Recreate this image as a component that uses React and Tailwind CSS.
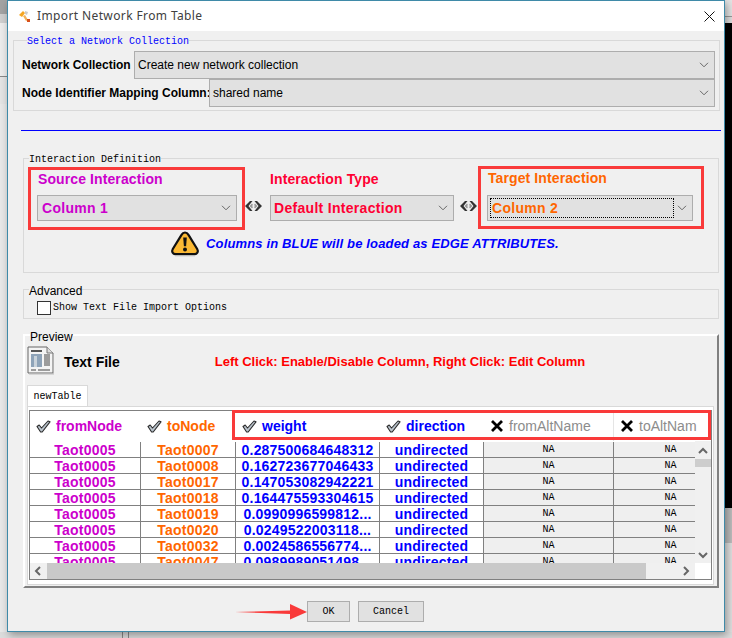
const ROWS = [
  ['Taot0007', '0.287500684648312'],
  ['Taot0008', '0.162723677046433'],
  ['Taot0017', '0.147053082942221'],
  ['Taot0018', '0.164475593304615'],
  ['Taot0019', '0.0990996599812...'],
  ['Taot0020', '0.0249522003118...'],
  ['Taot0032', '0.0024586556774...'],
  ['Taot0047', '0.0989989051498...'],
]

const Chevron = ({ className }) => (
  <svg viewBox="0 0 10 6" fill="none" stroke="#666" strokeWidth="1" className={className}>
    <path d="M1 .8 5 4.8 9 .8" />
  </svg>
)

const ScrollArrow = ({ d, className }) => (
  <svg viewBox="0 0 10 10" fill="none" stroke="#666" strokeWidth="2" className={className}>
    <path d={d} />
  </svg>
)

const LinkArrows = ({ className }) => (
  <svg viewBox="0 0 19 12" className={className}>
    <path d="M1 6 6 1h2.500L4.500 6l4 5H6Z" fill="#333" />
    <path d="M5.500 6 8 3.500 9 5 8 6l1 1-1 1.500Z" fill="#999" />
    <path d="M18 6 13 1h-2.500l4 5-4 5H13Z" fill="#333" />
    <path d="M13.500 6 11 3.500 10 5l1 1-1 1-.0 0 1 1.500Z" fill="#999" />
  </svg>
)

const WarnIcon = ({ className }) => (
  <svg viewBox="0 0 30 27" className={className}>
    <path d="M15 2.500c-1.600 0-2.700 1-3.500 2.400L2.800 19c-1.500 2.600-.2 5.200 2.800 5.200h18.800c3 0 4.300-2.600 2.800-5.200L18.500 4.900C17.700 3.500 16.600 2.500 15 2.500Z" fill="#fbb934" stroke="#111" strokeWidth="2.200" />
    <path d="M13.200 7.500h3.600l-.7 8.800h-2.200Z" fill="#111" />
    <circle cx="15" cy="19.500" r="2" fill="#111" />
    <path d="M5 25.800h20" stroke="#bbb" strokeWidth="1" />
  </svg>
)

const CheckMark = () => (
  <svg viewBox="0 0 15 13" className="h-[13px] w-[15px] shrink-0">
    <path d="M1 6.500 3.200 5l2.300 3L12 1l2 .8-7.800 10.200H4.600Z" fill="#b9c3cc" stroke="#2a2a2a" strokeWidth="1.100" strokeLinejoin="round" />
  </svg>
)

const CrossMark = () => (
  <svg viewBox="0 0 12 12" stroke="#000" strokeWidth="2.800" className="h-[12px] w-[12px] shrink-0">
    <path d="M1 1l10 10M11 1 1 11" />
  </svg>
)

const DocIcon = ({ className }) => (
  <svg viewBox="0 0 27 29" className={className}>
    <path d="M1 1h19l6 6v20H1Z" fill="#f4f4f4" stroke="#666" />
    <path d="M20 1v6h6" fill="#ddd" stroke="#777" />
    <path d="M2 28h25V8" fill="none" stroke="#bbb" />
    <path d="M4 4h11v2H4Z" fill="#555" />
    <rect x="4" y="8" width="11" height="13" fill="#8ea3b8" />
    <rect x="7" y="10" width="3" height="11" fill="#c9d2da" />
    <path d="M17 9h6M17 11h6M17 13h6M17 15h6M17 17h6M17 19h6M4 24h5M11 24h12" stroke="#444" strokeWidth="1" />
  </svg>
)

const AppIcon = ({ className }) => (
  <svg viewBox="0 0 11 12" className={className}>
    <path d="M0 5 4 1l2 2-3 4Z" fill="#f5a623" />
    <path d="M6 1l3 1-1 3-2-1Z" fill="#ccc" />
    <path d="M4 6l2-1 3 5-2 1Z" fill="#f2b35c" />
    <rect x="8" y="9" width="3" height="3" fill="#d8501c" />
  </svg>
)

function Combo({ children, textClass = 'text-black text-[12px]', className = '', focused }) {
  return (
    <div className={`flex items-center justify-between border border-[#adadad] bg-[#e1e1e1] ${className}`}>
      {focused ? (
        <span className={`ml-[2px] flex h-[20px] w-[184px] items-center border border-dotted border-black pl-px leading-none ${textClass}`}>{children}</span>
      ) : (
        <span className={`pl-[3px] leading-none ${textClass}`}>{children}</span>
      )}
      <Chevron className="mr-[5px] h-[6px] w-[10px]" />
    </div>
  )
}

const MonoLegend = ({ children, className = '' }) => (
  <legend className={`h-[8px] font-['Liberation_Mono',monospace] text-[10px] leading-[12px] ${className}`}>{children}</legend>
)

function HeaderCell({ label, off, className = '' }) {
  return (
    <div className={`flex h-[30px] items-center gap-[5px] pl-[6px] text-[14px] ${className}`}>
      {off ? <CrossMark /> : <CheckMark />}
      <span className={off ? 'text-[#8c8c8c]' : 'font-bold'}>{label}</span>
    </div>
  )
}

function DataRow({ row }) {
  const cell = 'flex h-[15px] items-center justify-center border-r border-[#808080] whitespace-nowrap text-[14px] font-bold leading-none tracking-[0.2px]'
  const na = "flex h-[15px] items-center justify-center border-r border-[#808080] bg-[#efefef] font-['Liberation_Mono',monospace] text-[10px] leading-none text-black"
  return (
    <div className="grid h-[16px] grid-cols-[111px_95px_144px_104px_130px_113px] border-b border-[#808080] bg-white">
      <div className={`${cell} text-[#cc00cc]`}>Taot0005</div>
      <div className={`${cell} text-[#ff6600]`}>{row[0]}</div>
      <div className={`${cell} text-[#0000ff]`}>{row[1]}</div>
      <div className={`${cell} text-[#0000ff]`}>undirected</div>
      <div className={na}>NA</div>
      <div className={`${na} border-r-0`}>NA</div>
    </div>
  )
}

export default function App() {
  return (
    <div className="flex h-[638px] w-[732px] flex-col overflow-hidden bg-[#e6e6e6] font-['Liberation_Sans',Arial,sans-serif]">
      <div className="flex h-[632px]">
        {/* what shows behind the dialog, left side */}
        <div className="flex w-[7px] flex-col">
          <div className="h-[14px] bg-[#a3a3a3]" />
          <div className="h-[9px] bg-[#cfcfcf]" />
          <div className="h-[53px] bg-[#ececec]" />
          <div className="h-[28px] border-t border-[#888] bg-[#e4e4e4]" />
          <div className="flex-1 bg-[#e8e8e8]" />
        </div>

        <div className="relative z-10 flex w-[718px] flex-col border border-[#3f8aa8] bg-[#f0f0f0] shadow-[2px_3px_8px_rgba(0,0,0,0.35)]">
          {/* title bar */}
          <div className="flex h-[30px] items-center bg-white">
            <AppIcon className="ml-[11px] h-[12px] w-[11px]" />
            <span className="ml-[7px] font-['Noto_Sans',sans-serif] text-[12px] tracking-[0.38px] text-[#404040]">Import Network From Table</span>
            <svg viewBox="0 0 11 11" stroke="#111" strokeWidth="1" className="ml-auto mr-[9px] h-[11px] w-[11px]">
              <path d="M.5.500l10 10M10.500.500l-10 10" />
            </svg>
          </div>

          {/* network collection */}
          <fieldset className="ml-[5px] mt-[5px] h-[75px] w-[707px] border border-[#d9d9d9] pl-[8px] pr-[4px] pt-[7px]">
            <MonoLegend className="ml-[5px] text-[#0000ff]">Select a Network Collection</MonoLegend>
            <div className="flex h-[28px] items-center">
              <span className="w-[112px] text-[12px] font-bold">Network Collection</span>
              <Combo className="h-[28px] flex-1">Create new network collection</Combo>
            </div>
            <div className="flex h-[28px] items-center">
              <span className="w-[187px] whitespace-nowrap text-[12px] font-bold">Node Identifier Mapping Column:</span>
              <Combo className="h-[28px] flex-1">shared name</Combo>
            </div>
          </fieldset>

          <div className="ml-[13px] mt-[19px] h-px w-[700px] bg-[#0000ff]" />

          {/* interaction definition */}
          <fieldset className="ml-[15px] mt-[23px] h-[119px] w-[696px] border border-[#d9d9d9]">
            <MonoLegend className="ml-[5px] text-black">Interaction Definition</MonoLegend>
            <div className="mt-[5px] flex items-start pl-[4px]">
              <div className="h-[63px] w-[217px] border-[3px] border-[#f93a3a] pl-[6px]">
                <div className="ml-px h-[18px] text-[14px] font-bold leading-[18px] tracking-[0.1px] text-[#cc00cc]">Source Interaction</div>
                <Combo className="mt-[7px] h-[26px] w-[200px]" textClass="text-[14px] font-bold tracking-[0.3px] text-[#cc00cc] pl-[4px]">Column 1</Combo>
              </div>
              <LinkArrows className="-ml-px mt-[33px] h-[12px] w-[19px]" />
              <div className="ml-[7px] w-[184px] pt-[3px]">
                <div className="h-[18px] text-[14px] font-bold leading-[18px] tracking-[0.1px] text-[#ff0033]">Interaction Type</div>
                <Combo className="mt-[7px] h-[26px]" textClass="text-[14px] font-bold tracking-[0.3px] text-[#ff0033]">Default Interaction</Combo>
              </div>
              <LinkArrows className="ml-[5px] mt-[33px] h-[12px] w-[19px]" />
              <div className="-mt-px h-[63px] w-[226px] border-[3px] border-[#f93a3a] pl-[6px]">
                <div className="ml-px h-[18px] text-[14px] font-bold leading-[18px] tracking-[0.1px] text-[#ff6600]">Target Interaction</div>
                <Combo focused className="mt-[8px] h-[26px] w-[206px]" textClass="text-[14px] font-bold tracking-[0.3px] text-[#ff6600]">Column 2</Combo>
              </div>
            </div>
            <div className="ml-[146px] flex h-[27px] items-center gap-[6px]">
              <WarnIcon className="h-[27px] w-[30px]" />
              <span className="whitespace-nowrap text-[13px] font-bold italic tracking-[0.15px] text-[#0000ff]">Columns in BLUE will be loaded as EDGE ATTRIBUTES.</span>
            </div>
          </fieldset>

          {/* advanced */}
          <fieldset className="ml-[15px] mt-[12px] h-[34px] w-[696px] border border-[#d9d9d9]">
            <legend className="ml-[5px] h-[8px] text-[12px] leading-[12px] text-black">Advanced</legend>
            <div className="mt-[8px] flex items-center pl-[13px]">
              <div className="h-[14px] w-[14px] border border-[#333] bg-white" />
              <span className="ml-[2px] font-['Liberation_Mono',monospace] text-[10px] leading-[14px]">Show Text File Import Options</span>
            </div>
          </fieldset>

          {/* preview */}
          <fieldset className="ml-[15px] mt-[12px] h-[257px] w-[696px] border-2 border-b-[#808080] border-l-white border-r-[#808080] border-t-white">
            <legend className="ml-[5px] h-[8px] text-[12px] leading-[12px] text-black">Preview</legend>
            <div className="mt-[7px] flex h-[29px] items-start pl-[2px]">
              <DocIcon className="h-[29px] w-[27px]" />
              <span className="ml-[10px] mt-[7px] text-[14px] font-bold leading-[18px]">Text File</span>
              <span className="ml-[95px] mt-[7px] whitespace-nowrap text-[13px] font-bold leading-[18px] text-[#ff0000]">Left Click: Enable/Disable Column, Right Click: Edit Column</span>
            </div>
            <div className="ml-[2px] mt-[10px] flex h-[21px] w-[61px] items-center justify-center rounded-t-[1px] border-l border-r border-t border-[#d9d9d9] bg-white font-['Liberation_Mono',monospace] text-[10px]">newTable</div>
            <div className="ml-[2px] h-[179px] w-[687px] border border-[#d9d9d9] bg-white pl-px pt-[3px]">
              <div className="relative h-[170px] w-[683px] border border-[#808080] bg-white">
                <div className="grid h-[30px] grid-cols-[111px_95px_144px_104px_130px_97px] overflow-hidden text-[#0000ff]">
                  <HeaderCell label="fromNode" className="text-[#cc00cc]" />
                  <HeaderCell label="toNode" className="text-[#ff6600]" />
                  <HeaderCell label="weight" />
                  <HeaderCell label="direction" />
                  <HeaderCell off label="fromAltName" className="gap-[6px] pl-[7px] border-r border-[#e5e5e5]" />
                  <HeaderCell off label="toAltNam" className="gap-[6px] pl-[7px]" />
                </div>
                <div className="flex h-[138px]">
                  <div className="flex w-[665px] flex-col">
                    <div className="h-[122px] overflow-hidden pt-px">
                      <div className="w-[697px]">
                        {ROWS.map((row) => <DataRow key={row[0]} row={row} />)}
                      </div>
                    </div>
                    <div className="flex h-[16px] items-center bg-[#f0f0f0]">
                      <ScrollArrow d="M7 1 3 5l4 4" className="ml-[3px] h-[10px] w-[10px]" />
                      <div className="ml-[4px] h-[16px] w-[599px] bg-[#c9c9c9]" />
                      <ScrollArrow d="M3 1l4 4-4 4" className="ml-[35px] h-[10px] w-[10px]" />
                    </div>
                  </div>
                  <div className="flex h-[122px] w-[16px] flex-col items-center bg-[#f0f0f0]">
                    <ScrollArrow d="M1 7l4-4 4 4" className="mt-[5px] h-[10px] w-[10px]" />
                    <div className="mt-[3px] h-[8px] w-full bg-[#cdcdcd]" />
                    <ScrollArrow d="M1 3l4 4 4-4" className="mt-auto mb-[3px] h-[10px] w-[10px]" />
                  </div>
                </div>
                {/* red annotation around the edge attribute columns */}
                <div className="absolute -top-px left-[202px] h-[30px] w-[479px] border-[3px] border-[#f93a3a]" />
              </div>
            </div>
          </fieldset>

          {/* buttons */}
          <div className="mt-[13px] flex items-center pl-[227px]">
            <svg viewBox="0 0 72 16" className="h-[16px] w-[72px]">
              <path d="M0 8 55 6.500 55 0 72 8 55 15.500 55 10Z" fill="#f93a3a" />
            </svg>
            <div className="flex h-[21px] w-[43px] items-center justify-center border border-[#adadad] bg-[#e1e1e1] font-['Liberation_Mono',monospace] text-[10px]">OK</div>
            <div className="ml-[8px] flex h-[21px] w-[66px] items-center justify-center border border-[#adadad] bg-[#e1e1e1] font-['Liberation_Mono',monospace] text-[10px]">Cancel</div>
          </div>
        </div>

        {/* behind the dialog, right side */}
        <div className="flex flex-1 flex-col">
          <div className="h-[16px] bg-[#e4e4e4]" />
          <div className="h-[7px] border-t border-[#999] bg-[#dedede]" />
          <div className="h-[485px] bg-black" />
          <div className="h-[35px] bg-[#bdbdbd]" />
          <div className="flex-1 bg-[#e0e0e0]" />
        </div>
      </div>
      <div className="flex h-[6px] bg-[#dcdcdc]">
        <div className="ml-[122px] w-px bg-[#888]" />
        <div className="ml-[5px] w-px bg-[#888]" />
      </div>
    </div>
  )
}
